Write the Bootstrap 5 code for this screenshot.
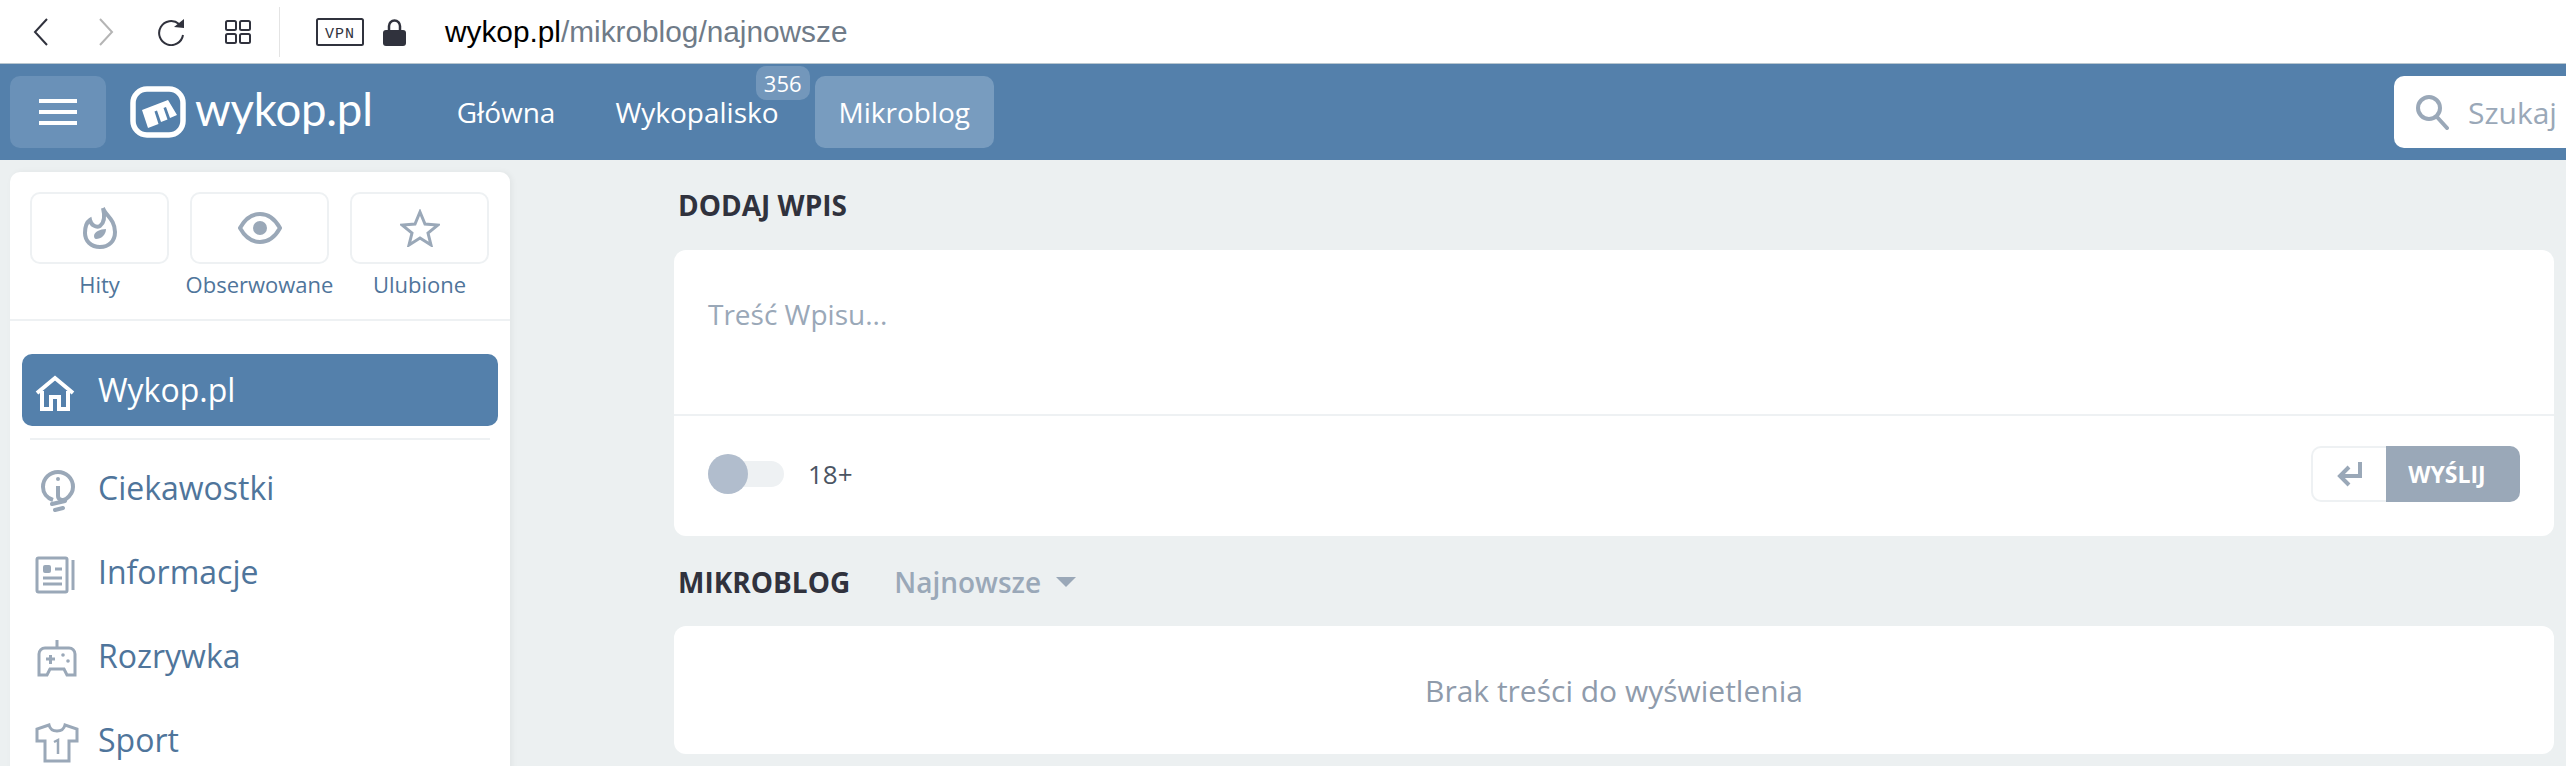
<!DOCTYPE html>
<html lang="pl">
<head>
<meta charset="utf-8">
<title>wykop.pl</title>
<link rel="stylesheet" href="https://cdn.jsdelivr.net/npm/bootstrap@5.3.0/dist/css/bootstrap.min.css">
<style>
html,body{height:766px;overflow:hidden;}
body{background:#ecf0f1;font-family:"Open Sans","Noto Sans",sans-serif;color:#30323d;}
.chrome-bar{height:64px;background:#fff;border-bottom:1px solid #b8c6cf;padding-left:33px;}
.chrome-bar svg{display:block;flex:none;}
.ic-forward{margin-left:50px;}.ic-reload{margin-left:44px;}.ic-grid{margin-left:39px;}
.chrome-sep{width:1px;height:50px;background:#e4e4e4;margin-left:28px;}
.ic-vpn{margin-left:36px;}.ic-lock{margin-left:19px;}
.url-text{margin-left:39px;font:29.8px "Liberation Sans",sans-serif;color:#6f7b88;white-space:nowrap;}
.url-text b{font-weight:400;color:#000;}
.site-head{height:96px;background:#5480ab;padding:0 0 0 10px;flex-wrap:nowrap;justify-content:flex-start;overflow:hidden;}
.head-left{flex:none;}
.burger{width:96px;height:72px;background:#6a91b8;border-radius:10px;border:0;}
.logo-wrap{margin-left:24px;color:#fff;text-decoration:none;}
.logo-word{font:400 45.5px/1 Lato,sans-serif;margin-left:9px;letter-spacing:-.2px;position:relative;top:-3px;}
.main-links{margin-left:60px;gap:0;}
.main-links a{font-size:28px;line-height:38px;color:#fff;padding:17px 24px;height:72px;border-radius:10px;white-space:nowrap;position:relative;display:block;}
.main-links li+li{margin-left:12px;}
.main-links a.on{background:#789cbf;padding:17px 24px;}
.count-tag{position:absolute;top:-10px;right:-7px;background:#7397bb;border-radius:10px;font-size:22px;line-height:34px;height:34px;padding:0 8px;color:#fff;z-index:2;}
.search-box{margin-left:auto;margin-right:-20px;flex:none;width:192px;height:72px;background:#fff;border-radius:10px;padding-left:21px;color:#9aa8b8;font-size:30px;gap:19px;}
.page-row{padding:12px 0 0 10px;}
.side-panel{width:500px;flex:none;background:#fff;border-radius:10px 10px 0 0;box-shadow:2px 0 6px rgba(0,0,0,.05);height:600px;}
.tile-row{padding:20px 20px 0;height:149px;border-bottom:2px solid #eef1f3;gap:21px;}
.tile-col{width:139px;text-align:center;}
.tile-box{height:72px;border:2px solid #eef1f3;border-radius:10px;}
.tile-label{color:#4f759b;font-size:22px;line-height:30px;margin-top:5px;white-space:nowrap;margin-left:-10px;margin-right:-10px;}
.side-list{padding:33px 12px 0;}
.side-item{height:72px;border-radius:10px;font-size:32px;color:#4f759b;text-decoration:none;}
.side-icon{width:76px;flex:none;padding-left:13px;}
.side-item.on{background:#5480ab;color:#fff;}
.side-line{height:2px;background:#eef1f3;margin:12px 8px 6px;}
.side-gap{height:84px;}
.main-col{width:1880px;flex:none;margin-left:164px;}
.sect-title{font-weight:700;font-size:28px;line-height:36px;color:#30323d;margin:0 0 0 4px;text-transform:uppercase;}
.white-box{background:#fff;border-radius:12px;}
.title-top{height:36px;margin-top:15px;}
.entry-box{height:286px;margin-top:27px;}
.entry-text{height:166px;padding:45px 34px 0;color:#9aa8b8;font-size:28px;line-height:38px;border-bottom:2px solid #eef1f3;}
.entry-foot{height:118px;padding:0 34px 2px;}
.toggle-track{width:76px;height:26px;background:#eef1f3;border-radius:13px;position:relative;}
.toggle-knob{position:absolute;left:0;top:-7px;width:40px;height:40px;background:#b1bdcd;border-radius:50%;}
.age-label{margin-left:24px;font-size:26px;color:#4b5563;}
.send-enter{width:75px;height:56px;border:2px solid #eef1f3;border-right:0;border-radius:10px 0 0 10px;}
.send-btn{width:134px;height:56px;background:#9aa8b8;border:0;border-radius:0 10px 10px 0;color:#fff;font-weight:700;font-size:23px;padding:0 12px 0 0;}
.list-head{margin-top:28px;height:36px;}
.sort-pick{margin-left:44px;color:#9aa8b8;font-weight:600;font-size:28px;line-height:36px;}
.sort-caret{margin-left:15px;width:0;height:0;border:10px solid transparent;border-top:10px solid #9aa8b8;border-bottom:0;}
.empty-box{height:128px;margin-top:26px;color:#8f9bab;font-size:30px;}
</style>
</head>
<body>
<div class="chrome-bar d-flex align-items-center">
  <svg width="15" height="28" viewBox="0 0 15 28" fill="none" stroke="#30323d" stroke-width="2"><path d="M14 1 2 14l12 13"/></svg>
  <svg class="ic-forward" width="16" height="28" viewBox="0 0 16 28" fill="none" stroke="#b5b5b5" stroke-width="2"><path d="M2 1l12 13L2 27"/></svg>
  <svg class="ic-reload" width="28" height="28" viewBox="0 0 28 28" fill="none" stroke="#30323d" stroke-width="2"><path d="M21 6A12 12 0 1 0 25 17"/><path fill="#30323d" stroke="none" d="M16 9l10 1V1z"/></svg>
  <svg class="ic-grid" width="26" height="24" viewBox="0 0 26 24" fill="none" stroke="#30323d" stroke-width="2"><rect x="1" y="1" width="10" height="9" rx="1.5"/><rect x="15" y="1" width="10" height="9" rx="1.5"/><rect x="1" y="14" width="10" height="9" rx="1.5"/><rect x="15" y="14" width="10" height="9" rx="1.5"/></svg>
  <div class="chrome-sep"></div>
  <svg class="ic-vpn" width="48" height="28" viewBox="0 0 48 28"><rect x="1" y="1" width="46" height="26" rx="1.5" fill="none" stroke="#30323d" stroke-width="2"/><text x="24" y="20" text-anchor="middle" font-family="Liberation Mono,monospace" font-size="15" fill="#30323d" letter-spacing="1">VPN</text></svg>
  <svg class="ic-lock" width="23" height="28" viewBox="0 0 23 28"><path d="M6 13V8a5.500 5.500 0 0 1 11 0v5" fill="none" stroke="#30323d" stroke-width="2.500"/><rect y="12" width="23" height="16" rx="3" fill="#30323d"/></svg>
  <div class="url-text"><b>wykop.pl</b>/mikroblog/najnowsze</div>
</div>

<nav class="navbar site-head p-0 position-relative">
  <div class="head-left d-flex align-items-center" style="padding-left:10px">
  <button class="burger d-flex align-items-center justify-content-center" type="button" aria-label="Menu">
    <svg width="38" height="26" viewBox="0 0 38 26" fill="#fff"><rect width="38" height="4"/><rect y="11" width="38" height="4"/><rect y="22" width="38" height="4"/></svg>
  </button>
  <a class="logo-wrap d-flex align-items-center" href="#">
    <svg width="56" height="52" viewBox="0 0 56 52"><rect x="3" y="3" width="50" height="46" rx="14" fill="none" stroke="#fff" stroke-width="5.500"/><path d="M12 24 38 14l9 15-7 3-4-11-2.500 1 4 11.500L31 36l-4-11.500-2.500 1 4 12.500L18 42z" fill="#fff"/></svg>
    <span class="logo-word">wykop.pl</span>
  </a>
  <ul class="nav main-links flex-nowrap">
    <li class="nav-item"><a class="nav-link" href="#">Główna</a></li>
    <li class="nav-item"><a class="nav-link" href="#">Wykopalisko<span class="count-tag">356</span></a></li>
    <li class="nav-item"><a class="nav-link on" href="#">Mikroblog</a></li>
  </ul>
  </div>
  <div class="search-box d-flex align-items-center">
    <svg width="34" height="36" viewBox="0 0 34 36" fill="none" stroke="#9aa8b8" stroke-width="4"><circle cx="14" cy="14" r="11"/><path d="M22 23l10 11" stroke-linecap="round"/></svg>
    <span>Szukaj</span>
  </div>
</nav>

<div class="page-row d-flex align-items-start">
  <aside class="side-panel">
    <div class="tile-row d-flex">
      <div class="tile-col">
        <div class="tile-box d-flex align-items-center justify-content-center">
          <svg width="34" height="44" viewBox="0 0 34 44" fill="none" stroke="#9aa8b8" stroke-width="4"><path d="M20 2c2 7 12 11 12 24 0 9-6 15-15 15S2 35 2 27c0-6 2-11 5-13 1 5 6 8 10 6 4-3 5-10 3-18z"/><path d="M23 23c0 6-5 10-10 10-1 0-2-1-2-3 0-4 6-7 12-7z" fill="#9aa8b8" stroke="none"/></svg>
        </div>
        <div class="tile-label">Hity</div>
      </div>
      <div class="tile-col">
        <div class="tile-box d-flex align-items-center justify-content-center">
          <svg width="44" height="32" viewBox="0 0 44 32" fill="none" stroke="#9aa8b8" stroke-width="4"><path d="M2 16C7 7 14 2 22 2s15 5 20 14c-5 9-12 14-20 14S7 25 2 16z"/><circle cx="22" cy="16" r="7" fill="#9aa8b8" stroke="none"/></svg>
        </div>
        <div class="tile-label">Obserwowane</div>
      </div>
      <div class="tile-col">
        <div class="tile-box d-flex align-items-center justify-content-center">
          <svg width="40" height="38" viewBox="0 0 40 38" fill="none" stroke="#9aa8b8" stroke-width="3"><path d="M20 3l5 12 13 1-10 8 3 12-11-7-11 7 3-12L2 16l13-1z"/></svg>
        </div>
        <div class="tile-label">Ulubione</div>
      </div>
    </div>
    <div class="side-list">
      <a class="side-item on d-flex align-items-center" href="#">
        <span class="side-icon"><svg width="40" height="36" viewBox="0 0 40 36" fill="none" stroke="#fff" stroke-width="4"><path d="M2 18 20 3l18 15"/><path d="M7 16v18h9V22h8v12h9V16"/></svg></span>Wykop.pl
      </a>
      <div class="side-line"></div>
      <a class="side-item side-gap d-flex align-items-center" href="#">
        <span class="side-icon"><svg width="34" height="42" viewBox="0 0 34 42" fill="none" stroke="#9aa8b8" stroke-width="4" style="margin-left:6px"><path d="M12 30C6 28 2 23 2 17 2 8 9 2 17 2s15 6 15 15c0 5-3 9-7 12-3 2-8 1-8-3V16"/><circle cx="17" cy="9" r="2" fill="#9aa8b8" stroke="none"/><path d="M11 34l13-3M14 40l8-2" stroke-linecap="round"/></svg></span>Ciekawostki
      </a>
      <a class="side-item side-gap d-flex align-items-center" href="#">
        <span class="side-icon"><svg width="40" height="38" viewBox="0 0 40 38" fill="none" stroke="#9aa8b8" stroke-width="3"><rect x="2" y="2" width="30" height="34" rx="1.500"/><path d="M38 4v30" stroke-width="3"/><rect x="8" y="9" width="8" height="8" rx="2" fill="#9aa8b8" stroke="none"/><path d="M20 13h7M8 22h19M8 28h19"/></svg></span>Informacje
      </a>
      <a class="side-item side-gap d-flex align-items-center" href="#">
        <span class="side-icon"><svg width="40" height="38" viewBox="0 0 40 38" fill="none" stroke="#9aa8b8" stroke-width="3" style="margin-left:2px"><path d="M20 0v7M8 8h24a6 6 0 0 1 6 6v21h-8l-3-6H13l-3 6H2V14a6 6 0 0 1 6-6z"/><path d="M9 19h9M13.500 15v9"/><circle cx="26" cy="15" r="1.800" fill="#9aa8b8" stroke="none"/><circle cx="31" cy="21" r="1.800" fill="#9aa8b8" stroke="none"/></svg></span>Rozrywka
      </a>
      <a class="side-item side-gap d-flex align-items-center" href="#">
        <span class="side-icon"><svg width="44" height="40" viewBox="0 0 44 40" fill="none" stroke="#9aa8b8" stroke-width="3"><path d="M14 2 2 6v12h8v20h24V18h8V6L30 2c-1 4-4 6-8 6s-7-2-8-6z"/><path d="M19 19l4-2v14" stroke-width="2.500"/></svg></span>Sport
      </a>
    </div>
  </aside>

  <main class="main-col">
    <div class="title-top d-flex align-items-center">
      <h2 class="sect-title">Dodaj wpis</h2>
    </div>
    <div class="white-box entry-box">
      <div class="entry-text">Treść Wpisu...</div>
      <div class="entry-foot d-flex align-items-center justify-content-between">
        <div class="d-flex align-items-center">
          <div class="toggle-track"><div class="toggle-knob"></div></div>
          <span class="age-label">18+</span>
        </div>
        <div class="d-flex">
          <div class="send-enter d-flex align-items-center justify-content-center">
            <svg width="26" height="26" viewBox="0 0 26 26" fill="none" stroke="#9aa8b8" stroke-width="4"><path d="M23 1v14H5"/><path d="M12 6l-9 9 9 9"/></svg>
          </div>
          <button class="send-btn" type="button">WYŚLIJ</button>
        </div>
      </div>
    </div>
    <div class="list-head d-flex align-items-center">
      <h2 class="sect-title">Mikroblog</h2>
      <span class="sort-pick">Najnowsze</span>
      <span class="sort-caret"></span>
    </div>
    <div class="white-box empty-box d-flex align-items-center justify-content-center">Brak treści do wyświetlenia</div>
  </main>
</div>
</body>
</html>
